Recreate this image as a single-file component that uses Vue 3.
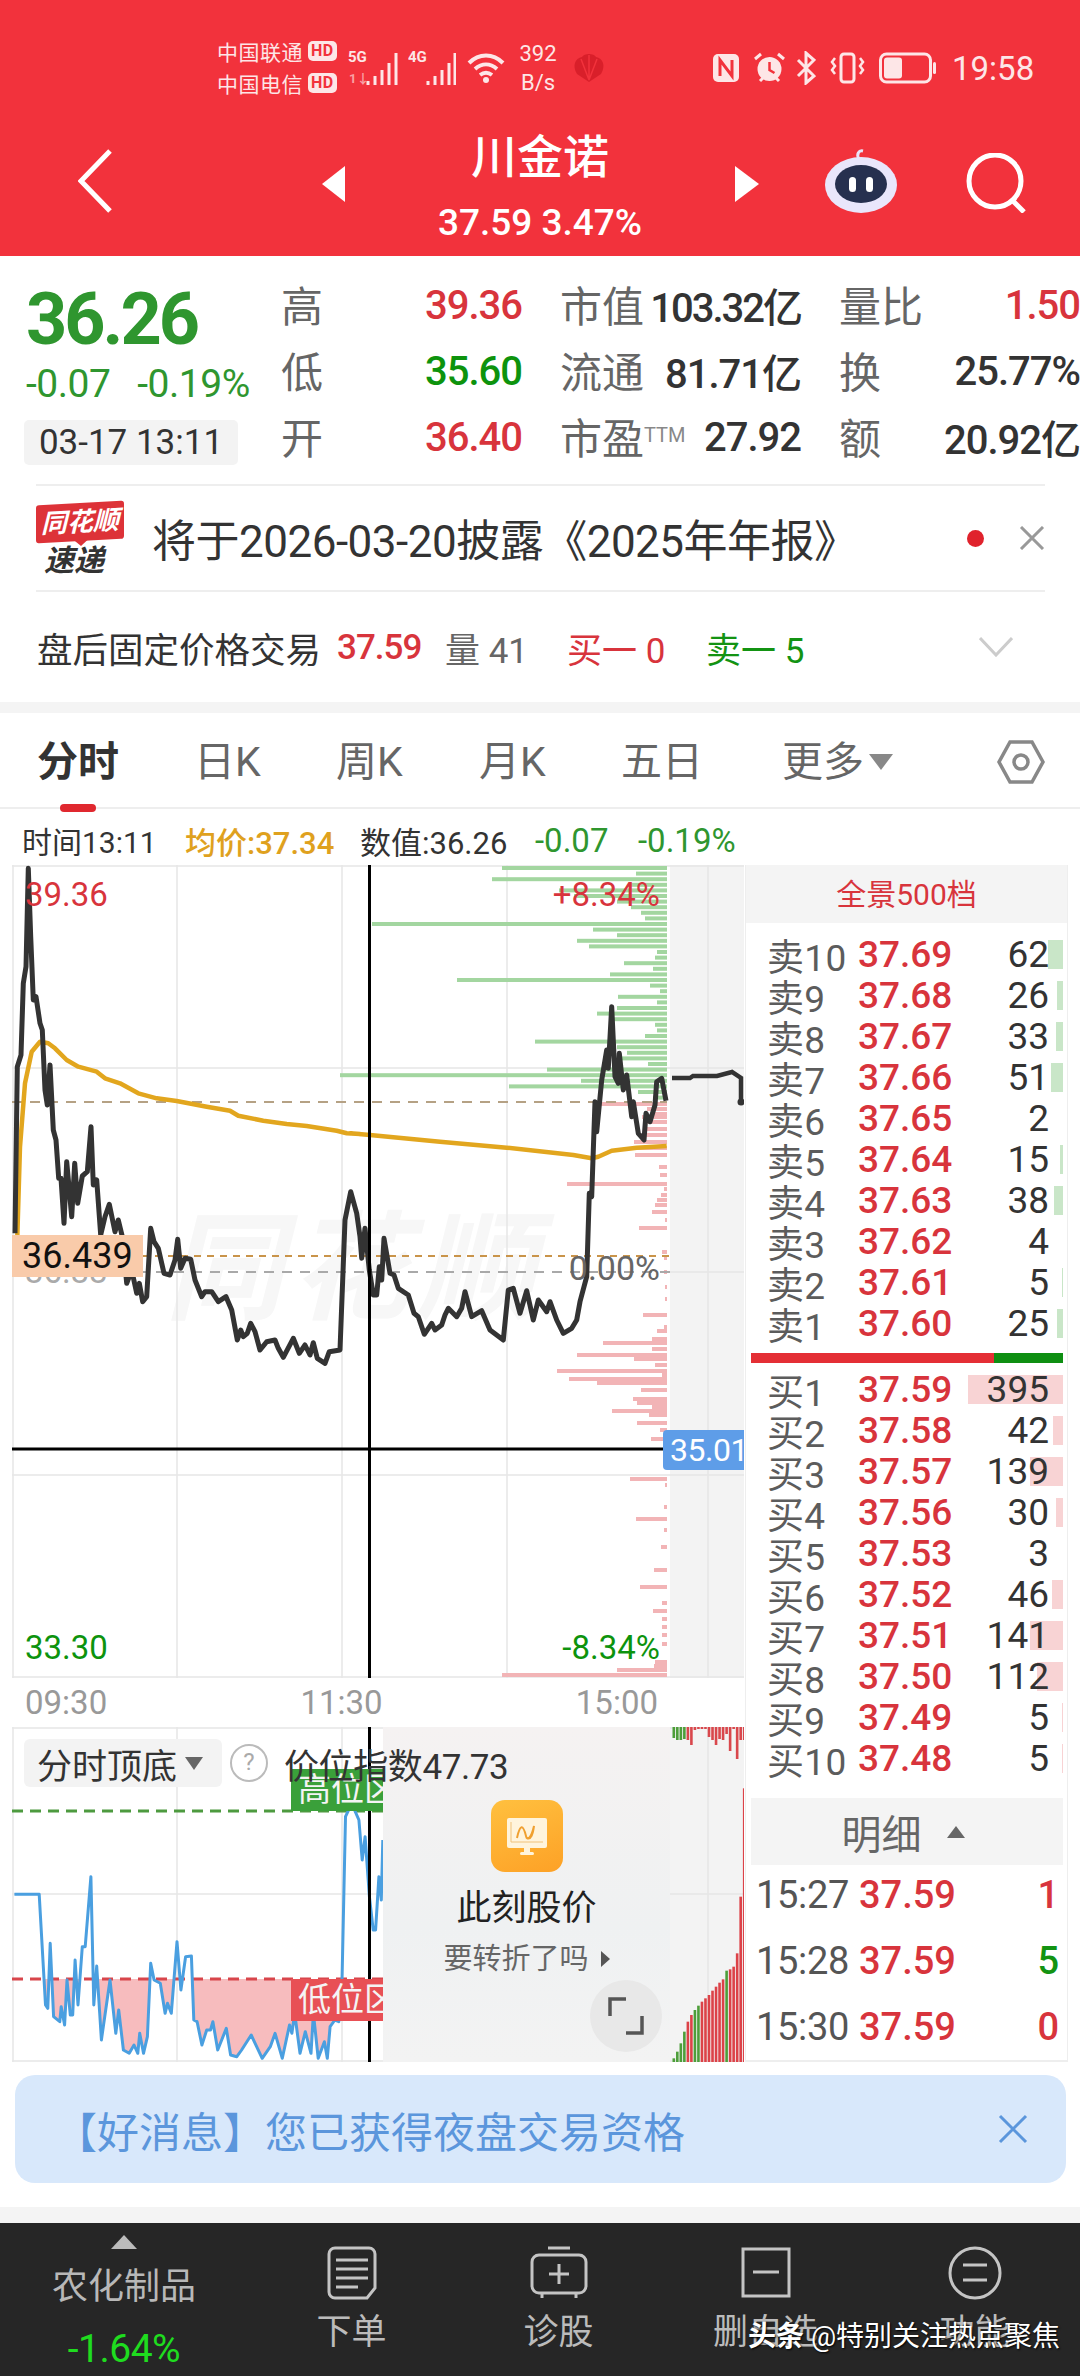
<script setup>
const toPage = (list, ox, oy, sx = 3, sy = 3) =>
  list.map(([x, y]) => [+(ox + x / sx).toFixed(1), +(oy + y / sy).toFixed(1)])
const line = (list) => list.map((p) => p.join(',')).join(' ')

const priceA = toPage([[15,1090],[22,590],[33,555],[40,340],[48,290],[55,-5],[62,200],[70,390],[78,380],[90,460],[97,480],[105,660],[112,705],[120,585],[130,780],[138,810],[146,925],[153,925],[162,1060],[170,875],[185,1040],[194,880],[203,1000],[217,918],[232,905],[243,770],[250,945],[260,930],[272,1095],[285,1040],[298,1003],[315,1085],[325,1050],[337,1100],[350,1240],[365,1200],[380,1270],[388,1240],[398,1295],[410,1280],[422,1075],[432,1115],[445,1135],[462,1210],[480,1215],[495,1170],[503,1108],[512,1195],[525,1165],[542,1168],[555,1230],[575,1280],[585,1265],[605,1265],[625,1295],[648,1280],[665,1320],[682,1410],[692,1380],[700,1400],[712,1390],[722,1360],[735,1385],[750,1440],[770,1415],[795,1410],[805,1435],[820,1462],[850,1405],[868,1450],[885,1425],[900,1455],[910,1418],[922,1465],[945,1480],[958,1445],[990,1440],[1005,1050],[1022,965],[1040,1030],[1050,1100]], 10, 870)
const priceB = toPage([[65,835],[75,745],[88,870],[100,945],[110,945],[118,860],[125,900],[132,775],[150,880],[162,885],[175,925],[205,945],[222,1000],[235,1010],[253,1063],[275,1030],[285,1050],[305,1035],[315,1005],[325,985],[350,1010],[365,985],[375,935],[395,1010],[425,992],[450,1050],[490,1080],[505,930],[520,925],[540,1000],[560,932],[580,1020],[595,960],[620,995],[630,965],[650,1020],[670,1060],[695,1045],[710,1020],[720,965],[740,890],[748,640],[755,650],[765,365],[770,455],[785,300],[800,210],[805,265],[815,80],[825,290],[835,310],[838,220],[850,330],[860,285],[875,410],[880,365],[895,460],[912,480],[918,400],[930,425],[945,375],[950,305],[965,295],[978,362]], 340, 980)
const priceLine = line([...priceA, ...priceB])
const avgLine = line([
  ...toPage([[22,1100],[30,830],[45,640],[65,545],[90,515],[115,520],[135,535],[170,570],[205,590],[260,605],[285,625],[330,640],[385,670],[440,685],[500,693],[590,710],[660,722],[685,737],[760,752],[830,762],[890,768],[980,782],[1010,790],[1050,792]], 10, 870),
  ...toPage([[30,460],[90,465],[300,485],[500,503],[700,525],[755,535],[775,530],[815,512],[890,503],[980,498]], 340, 980)
])
const afterLine = '672,1078 690,1078 693,1076 717,1076 732,1072 741,1078 741,1101'

const greenWidths = [165,31,175,36,108,93,50,36,26,22,295,74,50,90,78,10,12,43,14,57,210,17,7,49,10,50,70,55,12,10,22,132,50,40,45,19,120,327,86,158,29,14]
const greenBars = greenWidths.map((w, i) => ({ y: 866 + i * 5.6, w }))
const redBars = [[1102,67],[1107,20],[1112,15],[1115,25],[1120,20],[1127,20],[1133,23],[1140,33],[1146,35],[1153,32],[1165,8],[1173,7],[1182,100],[1187,3],[1193,6],[1198,10],[1203,12],[1210,15],[1218,2],[1226,28],[1250,5],[1256,3],[1270,3],[1285,2],[1297,2],[1313,24],[1325,3],[1329,10],[1337,15],[1341,64],[1347,15],[1353,90],[1357,33],[1363,12],[1369,110],[1373,5],[1377,98],[1381,70],[1388,26],[1397,34],[1401,30],[1405,15],[1409,55],[1413,18],[1421,30],[1428,7],[1437,16],[1477,37],[1483,2],[1505,3],[1517,31],[1528,3],[1545,6],[1568,13],[1585,27],[1601,5],[1609,14],[1617,5],[1625,5],[1633,5],[1642,5],[1660,12],[1664,13],[1668,50],[1673,165]]

const blue = toPage([[30,523],[82,523],[95,855],[100,865],[105,670],[112,890],[125,905],[128,860],[135,915],[140,780],[147,885],[152,885],[157,720],[163,855],[172,680],[178,680],[190,470],[196,855],[202,738],[212,960],[230,780],[242,940],[248,870],[258,990],[270,1000],[280,975],[288,1000],[292,940],[300,1000],[308,950],[315,730],[322,780],[335,790],[345,880],[350,850],[358,880],[370,665],[378,810],[388,710],[400,708],[405,900],[412,905],[422,975],[432,930],[440,930],[445,905],[455,990],[473,925],[482,1005],[495,1010],[505,990],[525,945],[548,1015],[565,980],[575,940],[590,1015],[605,915],[610,940],[616,880],[627,1000],[638,935],[650,1000],[655,880],[665,1015],[678,965],[684,1015],[690,920],[700,900],[708,905],[715,770],[722,290],[735,250],[750,300],[757,420],[763,350],[772,530],[780,630],[785,630],[792,470],[797,540],[800,360]], 0, 1720, 2.09, 3)
const blueLine = line(blue)
const blueArea = line([...blue, [383, 1979], [14, 1979]])

const volTops = [1015,995,970,935,905,885,870,857,845,835,825,812,800,788,778,752,748,740,700,530,205]
const volGreen = [0, 1, 2, 3, 6, 7, 15]
const volBars = volTops.map((t, i) => ({
  x: 672.5 + i * 3.52,
  y: 1720 + t / 3,
  h: 2062 - (1720 + t / 3),
  c: volGreen.includes(i) ? '#4d9e3a' : '#dc4248'
}))
const topVols = [11,13,13,12,13,18,3,2,2,2,10,13,18,12,13,7,24,2,32,13,13]
const topBars = topVols.map((h, i) => ({
  x: 672.5 + i * 3.52,
  h,
  c: i < 4 ? '#4d9e3a' : '#d9474c'
}))

const sells = [
  { n: '卖10', p: '37.69', q: 62, w: 15 },
  { n: '卖9', p: '37.68', q: 26, w: 6 },
  { n: '卖8', p: '37.67', q: 33, w: 7 },
  { n: '卖7', p: '37.66', q: 51, w: 12 },
  { n: '卖6', p: '37.65', q: 2, w: 0 },
  { n: '卖5', p: '37.64', q: 15, w: 3 },
  { n: '卖4', p: '37.63', q: 38, w: 9 },
  { n: '卖3', p: '37.62', q: 4, w: 0 },
  { n: '卖2', p: '37.61', q: 5, w: 1 },
  { n: '卖1', p: '37.60', q: 25, w: 6 }
]
const buys = [
  { n: '买1', p: '37.59', q: 395, w: 95 },
  { n: '买2', p: '37.58', q: 42, w: 10 },
  { n: '买3', p: '37.57', q: 139, w: 33 },
  { n: '买4', p: '37.56', q: 30, w: 7 },
  { n: '买5', p: '37.53', q: 3, w: 0 },
  { n: '买6', p: '37.52', q: 46, w: 11 },
  { n: '买7', p: '37.51', q: 141, w: 33 },
  { n: '买8', p: '37.50', q: 112, w: 26 },
  { n: '买9', p: '37.49', q: 5, w: 1 },
  { n: '买10', p: '37.48', q: 5, w: 1 }
]
const details = [
  { t: '15:27', p: '37.59', q: '1', c: 'red' },
  { t: '15:28', p: '37.59', q: '5', c: 'green' },
  { t: '15:30', p: '37.59', q: '0', c: 'red' }
]
const tabs = ['日K', '周K', '月K', '五日']
</script>

<template>
  <div class="page">
    <header class="header">
      <div class="status">
        <div class="carriers">
          <div class="carrier">中国联通<span class="hd">HD</span></div>
          <div class="carrier">中国电信<span class="hd">HD</span></div>
        </div>
        <svg class="signal" width="52" height="42" viewBox="0 0 52 42">
          <text x="0" y="15" class="sig-text">5G</text>
          <text x="1" y="36" class="sig-text dim">1↓</text>
          <path d="M20 38v-4M27 38v-9M34 38v-15M41 38v-22M48 38V6" class="sig-bars" />
        </svg>
        <svg class="signal two" width="48" height="42" viewBox="0 0 48 42">
          <text x="0" y="15" class="sig-text">4G</text>
          <path d="M20 38v-4M27 38v-9M34 38v-15M41 38v-22M47 38V6" class="sig-bars" />
        </svg>
        <svg class="wifi" width="38" height="32" viewBox="0 0 38 32">
          <path d="M2 11C12 1 26 1 36 11M8 17c7-6 15-6 22 0M13 23c4-3 8-3 12 0" />
          <circle cx="19" cy="28" r="3" />
        </svg>
        <div class="speed"><span>392</span><span>B/s</span></div>
        <svg class="shell" width="34" height="30" viewBox="0 0 34 30">
          <path class="shell-body" d="M17 29 5 21C0 13 3 5 10 4c2-4 12-4 14 0 7 1 10 9 5 17Z" />
          <path class="shell-rib" d="M17 27 9 6M17 27V2M17 27l8-21" />
        </svg>
        <svg class="sys" width="30" height="30" viewBox="0 0 30 30">
          <rect x="2" y="1" width="26" height="28" rx="5" fill="#fde6e7" />
          <path d="M9 23V7l12 16V7" fill="none" stroke="#f2323c" stroke-width="3" />
        </svg>
        <svg class="sys second" width="33" height="32" viewBox="0 0 33 32">
          <circle cx="16.500" cy="17" r="12" fill="#fde6e7" />
          <path d="M2 7l6-5M31 7l-6-5M7 29l3-3M26 29l-3-3" fill="none" stroke="#fde6e7" stroke-width="3" />
          <path d="M16.500 10v8l5 3" fill="none" stroke="#f2323c" stroke-width="2.500" />
        </svg>
        <svg class="sys third" width="20" height="34" viewBox="0 0 20 34">
          <path d="M2 9l16 16-8 7V2l8 7L2 25" fill="none" stroke="#fde6e7" stroke-width="3" />
        </svg>
        <svg class="sys fourth" width="37" height="32" viewBox="0 0 37 32">
          <rect x="12" y="2" width="13" height="28" rx="3" fill="none" stroke="#fde6e7" stroke-width="3" />
          <path d="M6 6 3 10l3 4-3 4 3 4M31 6l3 4-3 4 3 4-3 4" fill="none" stroke="#fde6e7" stroke-width="2.500" />
        </svg>
        <svg class="sys fifth" width="58" height="32" viewBox="0 0 58 32">
          <rect x="1.500" y="2" width="50" height="28" rx="6" fill="none" stroke="#fde6e7" stroke-width="3" />
          <rect x="5" y="5.500" width="18" height="21" rx="3" fill="#fde6e7" />
          <rect x="54" y="10" width="3" height="12" rx="1.500" fill="#fde6e7" />
        </svg>
        <span class="clock">19:58</span>
      </div>
      <nav class="nav">
        <svg class="back" width="34" height="64" viewBox="0 0 34 64">
          <path d="M32 2 3 32l29 30" />
        </svg>
        <span class="tri left"></span>
        <div class="title">
          <div class="name">川金诺</div>
          <div class="sub">37.59 3.47%</div>
        </div>
        <span class="tri right"></span>
        <svg class="robot" width="72" height="66" viewBox="0 0 72 66">
          <path d="M34 12c-3-5 0-9 4-8" fill="none" stroke="#e8e4f8" stroke-width="3" />
          <ellipse cx="36" cy="38" rx="36" ry="28" fill="#e9e6fb" />
          <ellipse cx="36" cy="37" rx="26" ry="19" fill="#26304f" />
          <rect x="24" y="30" width="7" height="15" rx="3.500" fill="#fff" />
          <rect x="41" y="30" width="7" height="15" rx="3.500" fill="#fff" />
        </svg>
        <svg class="search" width="62" height="60" viewBox="0 0 62 60">
          <circle cx="29" cy="28" r="26" />
          <path d="M46 47l12 12" />
        </svg>
      </nav>
    </header>

    <section class="quote">
      <div class="now">
        <div class="big">36.26</div>
        <div class="change"><span>-0.07</span><span>-0.19%</span></div>
        <div class="stamp">03-17 13:11</div>
      </div>
      <div class="stats">
        <div class="stat"><span class="k">高</span><span class="v red">39.36</span></div>
        <div class="stat"><span class="k">市值</span><span class="v tight">103.32亿</span></div>
        <div class="stat"><span class="k">量比</span><span class="v red">1.50</span></div>
        <div class="stat"><span class="k">低</span><span class="v green">35.60</span></div>
        <div class="stat"><span class="k">流通</span><span class="v">81.71亿</span></div>
        <div class="stat"><span class="k">换</span><span class="v">25.77%</span></div>
        <div class="stat"><span class="k">开</span><span class="v red">36.40</span></div>
        <div class="stat"><span class="k">市盈<sup class="ttm">TTM</sup></span><span class="v">27.92</span></div>
        <div class="stat"><span class="k">额</span><span class="v">20.92亿</span></div>
      </div>
    </section>

    <section class="notice">
      <div class="logo">
        <div class="logo-top">同花顺</div>
        <div class="logo-bottom">速递</div>
      </div>
      <div class="notice-text">将于2026-03-20披露《2025年年报》</div>
      <span class="dot"></span>
      <svg width="26" height="24" viewBox="0 0 26 24" class="close">
        <path d="M2 1l22 22M24 1 2 23" />
      </svg>
    </section>

    <section class="fixed">
      <span class="fixed-title">盘后固定价格交易</span>
      <span class="red price-a">37.59</span>
      <span class="gray vol-a">量 41</span>
      <span class="red buy-a">买一 0</span>
      <span class="green sell-a">卖一 5</span>
      <svg width="34" height="20" viewBox="0 0 34 20" class="chev">
        <path d="M1 1l16 17L33 1" />
      </svg>
    </section>

    <div class="band"></div>

    <div class="tabs">
      <div class="tab active">分时<i></i></div>
      <div v-for="t in tabs" :key="t" class="tab">{{ t }}</div>
      <div class="tab more">更多<b></b></div>
      <svg class="hex" width="48" height="44" viewBox="0 0 48 44">
        <path d="M13 2h22l11 20-11 20H13L2 22Z" />
        <circle cx="24" cy="22" r="7" />
      </svg>
    </div>

    <div class="info">
      <span class="i-time">时间13:11</span>
      <span class="i-avg">均价:37.34</span>
      <span class="i-val">数值:36.26</span>
      <span class="i-c1">-0.07</span>
      <span class="i-c2">-0.19%</span>
    </div>

    <div class="market">
      <div class="charts">
        <div class="main-chart">
          <div class="wm">同花顺</div>
          <svg class="canvas" width="732" height="813" viewBox="12 865 732 813">
            <rect x="670" y="865" width="74" height="813" fill="#f3f3f3" />
            <g stroke="#e6e6e6" stroke-width="1.500" fill="none">
              <path d="M13 865V1678M177 865V1678M342 865V1678M507 865V1678M708 865V1678" />
              <path d="M12 866H744M12 1068H744M12 1475H744M12 1677H744M670 1272H744" />
            </g>
            <rect v-for="(b, i) in greenBars" :key="'g' + i" :x="667 - b.w" :y="b.y" :width="b.w" height="4" fill="#a3d6a0" />
            <rect v-for="(b, i) in redBars" :key="'r' + i" :x="667 - b[1]" :y="b[0]" :width="b[1]" height="4" fill="#f2b4b6" />
            <path d="M12 1102H667" stroke="#b5a184" stroke-width="2" stroke-dasharray="10 8" />
            <path d="M12 1256H670" stroke="#c9944a" stroke-width="2" stroke-dasharray="7 6" />
            <path d="M12 1272H670" stroke="#a9a9a9" stroke-width="2" stroke-dasharray="10 8" />
            <polyline :points="avgLine" fill="none" stroke="#e2a61e" stroke-width="4.500" stroke-linejoin="round" />
            <polyline :points="priceLine" fill="none" stroke="#333" stroke-width="5" stroke-linejoin="round" />
            <polyline :points="afterLine" fill="none" stroke="#333" stroke-width="4.500" />
            <circle cx="741" cy="1102" r="3.500" fill="#333" />
            <path d="M369.500 865V1678" stroke="#000" stroke-width="3" />
            <path d="M12 1449H664" stroke="#000" stroke-width="3" />
          </svg>
          <span class="lbl hi-p">39.36</span>
          <span class="lbl hi-r">+8.34%</span>
          <span class="lbl lo-p">33.30</span>
          <span class="lbl lo-r">-8.34%</span>
          <span class="lbl mid-p">36.33</span>
          <span class="lbl mid-r">0.00%</span>
          <span class="cross-y">36.439</span>
          <span class="cross-x">35.01</span>
        </div>
        <div class="axis"><span>09:30</span><span>11:30</span><span>15:00</span></div>
        <div class="lower">
          <svg class="canvas" width="732" height="335" viewBox="12 1727 732 335">
            <defs>
              <clipPath id="below"><rect x="12" y="1979" width="400" height="83" /></clipPath>
            </defs>
            <rect x="670" y="1727" width="74" height="335" fill="#f3f3f3" />
            <g stroke="#e6e6e6" stroke-width="1.500" fill="none">
              <path d="M13 1727V2062M177 1727V2062M342 1727V2062M708 1727V2062" />
              <path d="M12 1728H744M12 1894H744M12 2061H744" />
            </g>
            <polygon :points="blueArea" fill="#f7bcbe" clip-path="url(#below)" />
            <path d="M12 1811H383" stroke="#4d9a3f" stroke-width="3" stroke-dasharray="11 7" />
            <path d="M12 1979H383" stroke="#d8454b" stroke-width="3" stroke-dasharray="11 7" />
            <polyline :points="blueLine" fill="none" stroke="#4a9fe0" stroke-width="3" stroke-linejoin="round" />
            <rect v-for="(b, i) in volBars" :key="'v' + i" :x="b.x" :y="b.y" width="2.600" :height="b.h" :fill="b.c" />
            <rect v-for="(b, i) in topBars" :key="'t' + i" :x="b.x" y="1727" width="2.600" :height="b.h" :fill="b.c" />
            <path d="M369.500 1727V2062" stroke="#000" stroke-width="3" />
          </svg>
          <span class="zone high">高位区</span>
          <span class="zone low">低位区</span>
          <div class="promo">
            <div class="app-icon">
              <svg width="44" height="44" viewBox="0 0 44 44">
                <rect x="2" y="4" width="40" height="30" rx="2" fill="#fff4dc" />
                <path d="M6 28h32M6 8v20" stroke="#f0c27a" stroke-width="1" />
                <path d="M12 24c3-14 6-14 9-2 1 5 5 3 8-10-1 8-3 14-7 12" fill="none" stroke="#f0a030" stroke-width="2" />
                <rect x="15" y="38" width="14" height="3" rx="1.500" fill="#fff4dc" />
                <rect x="19" y="34" width="6" height="4" fill="#fff4dc" />
              </svg>
            </div>
            <div class="promo-title">此刻股价</div>
            <div class="promo-sub">要转折了吗<b></b></div>
            <div class="expand">
              <svg width="36" height="38" viewBox="0 0 36 38">
                <path d="M2 19V2h16M34 19v17H18" />
              </svg>
            </div>
          </div>
          <div class="lower-head">
            <div class="drop">分时顶底<b></b></div>
            <span class="help">?</span>
            <span class="index">价位指数47.73</span>
          </div>
        </div>
      </div>

      <aside class="book">
        <div class="book-head">全景500档</div>
        <div class="sell-list">
          <div v-for="r in sells" :key="r.n" class="level">
            <i class="bar sell-bar" :style="{ width: r.w + 'px' }"></i>
            <span class="lv-name">{{ r.n }}</span>
            <span class="lv-price">{{ r.p }}</span>
            <span class="lv-qty">{{ r.q }}</span>
          </div>
        </div>
        <div class="ratio"><i></i></div>
        <div class="buy-list">
          <div v-for="r in buys" :key="r.n" class="level">
            <i class="bar buy-bar" :style="{ width: r.w + 'px' }"></i>
            <span class="lv-name">{{ r.n }}</span>
            <span class="lv-price">{{ r.p }}</span>
            <span class="lv-qty">{{ r.q }}</span>
          </div>
        </div>
        <div class="detail-head">明细<b></b></div>
        <div v-for="d in details" :key="d.t" class="detail">
          <span class="d-time">{{ d.t }}</span>
          <span class="d-price">{{ d.p }}</span>
          <span class="d-qty" :class="d.c">{{ d.q }}</span>
        </div>
      </aside>
    </div>

    <div class="banner">
      <span class="banner-text">【好消息】您已获得夜盘交易资格</span>
      <svg width="30" height="30" viewBox="0 0 30 30">
        <path d="M2 2l26 26M28 2 2 28" />
      </svg>
    </div>

    <div class="footer-gap"></div>

    <footer class="dock">
      <div class="dock-first">
        <span class="up"></span>
        <span class="sector">农化制品</span>
        <span class="sector-pct">-1.64%</span>
      </div>
      <div class="dock-item">
        <svg width="50" height="54" viewBox="0 0 50 54">
          <path d="M8 2h34a6 6 0 0 1 6 6v34l-8 10H8a6 6 0 0 1-6-6V8a6 6 0 0 1 6-6Z" />
          <path d="M9 14h32M9 23h32M9 32h32M9 41h22" />
        </svg>
        <span>下单</span>
      </div>
      <div class="dock-item">
        <svg width="58" height="54" viewBox="0 0 58 54">
          <path d="M18 2h22" />
          <rect x="2" y="9" width="54" height="38" rx="7" />
          <path d="M29 18v20M19 28h20M12 48v4M46 48v4" />
        </svg>
        <span>诊股</span>
      </div>
      <div class="dock-item">
        <svg width="50" height="54" viewBox="0 0 50 54">
          <rect x="2" y="3" width="46" height="47" />
          <path d="M12 26h26" />
        </svg>
        <span>删自选</span>
      </div>
      <div class="dock-item">
        <svg width="54" height="54" viewBox="0 0 54 54">
          <circle cx="27" cy="27" r="25" />
          <path d="M15 19h24M15 34h24" />
        </svg>
        <span>功能</span>
      </div>
      <div class="mark"><b>头条</b> @特别关注热点聚焦</div>
    </footer>
  </div>
</template>

<style>
html, body { margin: 0; background: #fff; }
</style>

<style scoped>
.page {
  position: relative;
  width: 1080px;
  height: 2376px;
  overflow: hidden;
  background: #fff;
  color: #333;
  font-family: Roboto, "Noto Sans CJK SC", sans-serif;
}
.red { color: #d8343c; }
.green { color: #139313; }
.gray { color: #666; }

.header { height: 256px; background: #f2323c; color: #fff; }
.status { height: 136px; display: flex; align-items: center; padding: 0 0 0 217px; box-sizing: border-box; color: #fde6e7; }
.carriers { width: 131px; margin-top: -3px; }
.carrier { display: flex; align-items: center; height: 32px; font-size: 21px; letter-spacing: 0.500px; white-space: nowrap; }
.hd { margin-left: 5px; padding: 0 3px; height: 20px; line-height: 20px; background: #fde6e7; color: #f2323c; border-radius: 5px; font-size: 16px; font-weight: 700; }
.signal { margin-left: 0; flex: none; }
.signal.two { margin-left: 8px; }
.sig-text { font-size: 15px; font-weight: 700; fill: #fde6e7; }
.sig-text.dim { fill: #f9a0a4; font-size: 13px; }
.sig-bars { fill: none; stroke: #fde6e7; stroke-width: 3; }
.wifi { margin-left: 11px; flex: none; }
.wifi path { fill: none; stroke: #fde6e7; stroke-width: 4; }
.wifi circle { fill: #fde6e7; }
.speed { display: flex; flex-direction: column; align-items: center; margin-left: 12px; width: 42px; font-size: 22px; line-height: 29px; }
.shell { margin-left: 13px; flex: none; }
.shell-body { fill: #d91f2a; }
.shell-rib { fill: none; stroke: #f2323c; stroke-width: 1.500; }
.sys { flex: none; margin-left: 105px; }
.sys.second { margin-left: 12px; }
.sys.third { margin-left: 10px; }
.sys.fourth { margin-left: 13px; }
.sys.fifth { margin-left: 13px; }
.clock { margin-left: 15px; font-size: 33px; }

.nav { height: 100px; display: flex; align-items: center; padding-left: 78px; }
.back { flex: none; margin-bottom: 10px; }
.back path { fill: none; stroke: #fff; stroke-width: 5; }
.tri { flex: none; width: 0; height: 0; margin-bottom: 4px; border-top: 18px solid transparent; border-bottom: 18px solid transparent; }
.tri.left { margin-left: 210px; border-right: 23px solid #fff; }
.tri.right { border-left: 24px solid #fff; }
.title { flex: none; width: 390px; text-align: center; }
.name { font-size: 46px; line-height: 56px; font-weight: 500; }
.sub { margin-top: 18px; font-size: 37px; line-height: 40px; font-weight: 500; }
.robot { flex: none; margin: 0 0 12px 66px; }
.search { flex: none; margin: 0 0 6px 69px; }
.search circle, .search path { fill: none; stroke: #fff; stroke-width: 5; }

.quote { height: 228px; display: flex; box-sizing: border-box; padding-top: 16px; }
.now { width: 281px; flex: none; padding-left: 26px; box-sizing: border-box; }
.big { margin-top: 10px; font-size: 72px; line-height: 76px; font-weight: 700; color: #2f962f; letter-spacing: -3px; }
.change { display: flex; gap: 27px; margin-top: 4px; font-size: 39px; line-height: 44px; color: #2f962f; letter-spacing: -0.500px; white-space: nowrap; }
.stamp { margin: 14px 0 0 -2px; width: 214px; height: 45px; line-height: 45px; background: #f3f3f3; border-radius: 5px; text-align: center; font-size: 35px; color: #333; white-space: nowrap; }
.stats { display: grid; grid-template-columns: repeat(3, 241px); grid-auto-rows: 66px; column-gap: 38px; }
.stat { display: flex; justify-content: space-between; align-items: center; white-space: nowrap; }
.k { font-size: 42px; color: #666; margin-bottom: 4px; }
.v { font-size: 40px; font-weight: 500; letter-spacing: -1px; color: #333; }
.v.tight { letter-spacing: -2px; }
.v.red { color: #d8343c; }
.v.green { color: #0d930d; }
.ttm { font-size: 20px; color: #888; vertical-align: 12px; line-height: 0; }

.notice { height: 108px; margin: 0 35px 0 36px; display: flex; align-items: center; border-top: 2px solid #eee; border-bottom: 2px solid #eee; box-sizing: border-box; }
.logo { position: relative; width: 90px; flex: none; margin-top: 2px; }
.logo-top { width: 88px; height: 38px; line-height: 38px; background: #dd3238; border-radius: 3px; color: #fff; font-size: 26px; font-weight: 700; font-style: italic; text-align: center; transform: skewY(-3deg); }
.logo-top::after { content: ""; position: absolute; left: 38px; top: 37px; border-left: 7px solid transparent; border-right: 7px solid transparent; border-top: 6px solid #dd3238; }
.logo-bottom { margin-top: 5px; padding-left: 8px; font-size: 30px; line-height: 30px; font-weight: 700; font-style: italic; color: #333; }
.notice-text { flex: 1; margin-left: 26px; font-size: 44px; letter-spacing: -0.500px; color: #333; white-space: nowrap; }
.dot { width: 17px; height: 17px; border-radius: 50%; background: #e0222c; margin-right: 35px; }
.close path { fill: none; stroke: #999; stroke-width: 3; }

.fixed { height: 110px; display: flex; align-items: center; padding: 0 36px 0 37px; font-size: 35px; white-space: nowrap; }
.fixed-title { width: 300px; flex: none; font-size: 35.500px; color: #333; }
.price-a { width: 108px; flex: none; font-weight: 500; letter-spacing: -1px; }
.vol-a { width: 122px; flex: none; }
.buy-a { width: 139px; flex: none; }
.sell-a { width: 274px; flex: none; }
.chev { margin-left: -1px; }
.chev path { fill: none; stroke: #ccc; stroke-width: 3; }

.band { height: 11px; background: #f4f4f4; }

.tabs { position: relative; height: 96px; display: flex; align-items: center; padding-bottom: 6px; box-sizing: border-box; border-bottom: 2px solid #eee; }
.tab { position: absolute; font-size: 41px; color: #666; top: 24px; line-height: 50px; white-space: nowrap; }
.tab:nth-child(1) { left: 37px; }
.tab:nth-child(2) { left: 194px; }
.tab:nth-child(3) { left: 336px; }
.tab:nth-child(4) { left: 479px; }
.tab:nth-child(5) { left: 621px; }
.tab.more { left: 782px; display: flex; align-items: center; }
.tab.more b { margin-left: 5px; border-left: 12px solid transparent; border-right: 12px solid transparent; border-top: 16px solid #888; }
.tab.active { font-size: 41px; font-weight: 700; color: #333; }
.tab.active i { position: absolute; left: 23px; top: 67px; width: 36px; height: 8px; border-radius: 4px; background: #e0282f; }
.hex { position: absolute; left: 997px; top: 27px; }
.hex path, .hex circle { fill: none; stroke: #888; stroke-width: 3.500; }

.info { height: 56px; display: flex; align-items: center; font-size: 30px; white-space: nowrap; padding: 6px 0 0 22px; box-sizing: border-box; color: #333; }
.i-time { width: 163px; flex: none; }
.i-avg { width: 175px; flex: none; color: #dfa11e; font-weight: 500; font-size: 31px; }
.i-val { width: 175px; flex: none; font-size: 31px; }
.i-c1 { width: 103px; flex: none; color: #2f962f; font-size: 33px; }
.i-c2 { flex: none; color: #2f962f; font-size: 33px; }

.market { display: flex; height: 1197px; padding-left: 12px; }
.charts { width: 732px; flex: none; }
.main-chart { position: relative; height: 813px; overflow: hidden; }
.canvas { position: absolute; left: 0; top: 0; display: block; }
.wm { position: absolute; left: 153px; top: 340px; font-size: 118px; line-height: 130px; font-weight: 700; font-style: italic; color: #f7f7f7; letter-spacing: 8px; white-space: nowrap; }
.lbl { position: absolute; font-size: 33px; line-height: 40px; white-space: nowrap; z-index: 1; }
.hi-p { left: 13px; top: 10px; color: #d8343c; }
.hi-r { right: 84px; top: 10px; color: #d8343c; }
.lo-p { left: 13px; top: 763px; color: #0d930d; }
.lo-r { right: 84px; top: 763px; color: #0d930d; }
.mid-p { left: 13px; top: 387px; color: #aaa; }
.mid-r { right: 84px; top: 383px; color: #666; font-size: 34px; }
.cross-y { position: absolute; z-index: 2; left: 0; top: 370px; width: 131px; height: 42px; line-height: 42px; padding-left: 10px; box-sizing: border-box; background: #f9cbaa; color: #111; font-size: 36px; white-space: nowrap; }
.cross-x { position: absolute; z-index: 2; left: 651px; top: 565px; width: 81px; height: 40px; line-height: 40px; padding-left: 7px; box-sizing: border-box; background: #5e9de8; color: #fff; border-radius: 4px 0 0 4px; font-size: 32px; letter-spacing: -0.500px; white-space: nowrap; }

.axis { height: 49px; display: flex; justify-content: space-between; padding: 0 86px 0 13px; align-items: center; font-size: 33px; color: #999; }
.lower { position: relative; height: 335px; overflow: hidden; }
.zone { position: absolute; left: 279px; width: 100px; padding-left: 7px; box-sizing: border-box; height: 42px; line-height: 42px; color: #f4f4f4; font-size: 33px; white-space: nowrap; overflow: hidden; }
.zone.high { top: 42px; background: #3aa03a; }
.zone.low { top: 252px; background: #e85055; }
.promo { position: absolute; left: 371px; top: 0; width: 287px; height: 335px; display: flex; flex-direction: column; align-items: center; background: linear-gradient(180deg, #f5f2f2, #eff1f2 60%, #f3f3f3); }
.app-icon { margin-top: 73px; width: 72px; height: 72px; border-radius: 14px; background: linear-gradient(160deg, #ffc03f, #fda126); display: flex; align-items: center; justify-content: center; }
.promo-title { margin-top: 16px; font-size: 35px; line-height: 42px; color: #222; }
.promo-sub { margin-top: 10px; font-size: 29px; line-height: 38px; color: #666; display: flex; align-items: center; white-space: nowrap; }
.promo-sub b { margin-left: 12px; border-top: 8px solid transparent; border-bottom: 8px solid transparent; border-left: 9px solid #555; }
.expand { position: absolute; left: 207px; top: 253px; width: 72px; height: 72px; border-radius: 50%; background: #e8e8e8; display: flex; align-items: center; justify-content: center; }
.expand path { fill: none; stroke: #555; stroke-width: 3.500; }
.lower-head { position: absolute; left: 12px; top: 12px; display: flex; align-items: center; height: 48px; white-space: nowrap; z-index: 2; }
.drop { display: flex; align-items: center; height: 48px; width: 198px; box-sizing: border-box; padding-left: 13px; background: #f3f3f3; border-radius: 6px; font-size: 35px; color: #333; }
.drop b { margin-left: 8px; border-left: 9px solid transparent; border-right: 9px solid transparent; border-top: 13px solid #666; }
.help { margin-left: 8px; width: 34px; height: 34px; line-height: 33px; border: 2px solid #bbb; border-radius: 50%; text-align: center; color: #aaa; font-size: 24px; }
.index { margin-left: 16px; font-size: 35px; letter-spacing: -0.400px; color: #333; }

.book { width: 323px; flex: none; margin-left: 1px; box-sizing: border-box; border-left: 1px solid #eee; border-right: 1px solid #eee; border-bottom: 2px solid #eee; }
.book-head { height: 58px; line-height: 60px; background: #f4f4f4; color: #d8343c; font-size: 30px; text-align: center; }
.sell-list { padding-top: 11px; }
.level { position: relative; height: 41px; display: flex; align-items: center; padding-left: 21px; white-space: nowrap; }
.lv-name { width: 91px; flex: none; font-size: 37px; color: #5c5c5c; letter-spacing: 0.300px; }
.lv-price { width: 100px; flex: none; font-size: 37px; font-weight: 500; color: #d8343c; }
.lv-qty { position: absolute; right: 18px; font-size: 37px; color: #333; }
.bar { position: absolute; right: 4px; top: 6px; height: 29px; }
.buy-bar { background: #f8d3d4; }
.sell-bar { background: #c9e6c8; }
.ratio { margin: 9px 4px 0 5px; height: 10px; background: #0e8f12; }
.ratio i { display: block; width: 243px; height: 10px; background: #e42f35; }
.buy-list { padding-top: 6px; }
.detail-head { margin: 19px 4px 0 5px; height: 67px; background: #f4f4f4; display: flex; align-items: center; justify-content: center; font-size: 40px; color: #666; padding-right: 8px; box-sizing: border-box; }
.detail-head b { margin-left: 25px; border-left: 9px solid transparent; border-right: 9px solid transparent; border-bottom: 12px solid #666; }
.detail { position: relative; height: 66px; padding: 0 0 6px 10px; box-sizing: border-box; display: flex; align-items: center; font-size: 38px; white-space: nowrap; }
.d-time { width: 103px; flex: none; color: #555; letter-spacing: -0.300px; }
.d-price { flex: none; color: #d8343c; font-weight: 500; }
.d-qty { position: absolute; right: 8px; font-weight: 500; }

.banner { margin: 13px 14px 0 15px; height: 108px; background: #d8e8fb; border-radius: 20px; display: flex; align-items: center; justify-content: space-between; padding: 0 38px 0 44px; box-sizing: border-box; }
.banner-text { font-size: 42px; color: #5b96dc; white-space: nowrap; margin-left: -4px; }
.banner path { fill: none; stroke: #5b96dc; stroke-width: 3; }
.footer-gap { height: 16px; margin-top: 24px; background: #f4f4f4; }

.dock { position: relative; height: 153px; background: #262626; display: grid; grid-template-columns: 248px 207px 207px 207px 211px; color: #bbb; }
.dock-first { display: flex; flex-direction: column; align-items: center; }
.up { margin-top: 12px; border-left: 13px solid transparent; border-right: 13px solid transparent; border-bottom: 14px solid #bbb; }
.sector { margin-top: 15px; font-size: 36px; line-height: 46px; color: #b8b8b8; }
.sector-pct { margin-top: 17px; font-size: 39px; letter-spacing: -0.500px; line-height: 44px; color: #1fdc1f; }
.dock-item { display: flex; flex-direction: column; align-items: center; padding-top: 23px; box-sizing: border-box; }
.dock-item svg { display: block; height: 54px; }
.dock-item svg * { fill: none; stroke: #c4c4c4; stroke-width: 3; }
.dock-item span { margin-top: 10px; font-size: 35px; line-height: 46px; color: #bbb; white-space: nowrap; }
.mark { position: absolute; left: 748px; top: 94px; font-size: 28px; line-height: 40px; color: #fff; white-space: nowrap; text-shadow: 1px 1px 2px #000; }
.mark b { font-weight: 700; }
</style>
